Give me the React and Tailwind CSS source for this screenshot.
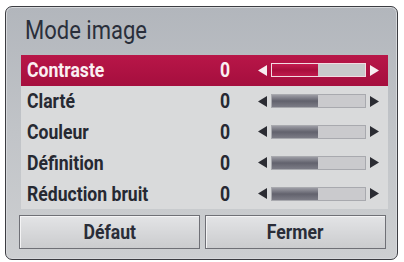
import React from "react";

const rows = [
  { label: "Contraste", value: 0, active: true },
  { label: "Clarté", value: 0 },
  { label: "Couleur", value: 0 },
  { label: "Définition", value: 0 },
  { label: "Réduction bruit", value: 0 },
];

const font = { fontFamily: 'Roboto, "Liberation Sans", sans-serif' };

function Arrow({ dir, color }) {
  return (
    <svg width="9" height="11" viewBox="0 0 9 11" className="shrink-0">
      {dir === "left" ? (
        <polygon points="9,0 9,11 0,5.5" fill={color} />
      ) : (
        <polygon points="0,0 0,11 9,5.5" fill={color} />
      )}
    </svg>
  );
}

function Slider({ active }) {
  const arrow = active ? "#f7eef1" : "#2b2c33";
  return (
    <div className="flex items-center gap-[4px]">
      <Arrow dir="left" color={arrow} />
      <div
        className={
          active
            ? "flex h-[14px] w-[95px] border border-[#f2dbe2] bg-[#c9c9cb]"
            : "flex h-[14px] w-[95px] border border-[#a8a9ae] bg-[#cacacd]"
        }
      >
        <div
          className={
            active
              ? "h-full w-[46px] bg-gradient-to-b from-[#c41c50] via-[#a80d3c] to-[#c01a4d]"
              : "h-full w-[46px] bg-gradient-to-b from-[#9c9ca4] via-[#62626d] to-[#7c7c86]"
          }
        />
      </div>
      <Arrow dir="right" color={arrow} />
    </div>
  );
}

export default function App() {
  return (
    <div className="h-[262px] w-[404px] bg-white pl-[5px] pt-[6px]" style={font}>
      <div className="flex h-[254px] w-[393px] flex-col rounded-[7px] border border-[#3c3d42] bg-gradient-to-b from-[#b2b6bc] via-[#c1c4c8] to-[#cdcfd1] shadow-[inset_0_0_0_1px_#d6d8db]">
        <div className="flex h-[48px] items-center pl-[19px] text-[25px] text-[#2a2f3b]">
          <span className="inline-block origin-left scale-x-[0.88]">Mode image</span>
        </div>
        <div className="ml-[15px] mr-[9px] flex flex-col bg-[#d9dadb]">
          {rows.map((row) => (
            <div
              key={row.label}
              className={
                row.active
                  ? "flex h-[30.8px] items-center bg-gradient-to-b from-[#b81648] to-[#a50e3e] text-[#fbeef2]"
                  : "flex h-[30.8px] items-center text-[#262932]"
              }
            >
              <div className="w-[199px] pl-[6px] text-[20px] font-bold">
                <span className="inline-block origin-left scale-x-[0.88]">{row.label}</span>
              </div>
              <div className="w-[38px] text-[20px] font-bold">
                <span className="inline-block origin-left scale-x-[0.88]">{row.value}</span>
              </div>
              <Slider active={row.active} />
            </div>
          ))}
        </div>
        <div className="ml-[13px] mr-[11px] mt-[6px] flex gap-[5px]">
          {["Défaut", "Fermer"].map((b) => (
            <div
              key={b}
              className="flex h-[34px] flex-1 items-center justify-center border border-[#6f7076] bg-gradient-to-b from-[#e3e4e6] to-[#cbccce] text-[20px] font-bold text-[#2a2d38] shadow-[inset_1px_1px_0_#f4f4f5]"
            >
              <span className="inline-block scale-x-[0.88]">{b}</span>
            </div>
          ))}
        </div>
      </div>
    </div>
  );
}
